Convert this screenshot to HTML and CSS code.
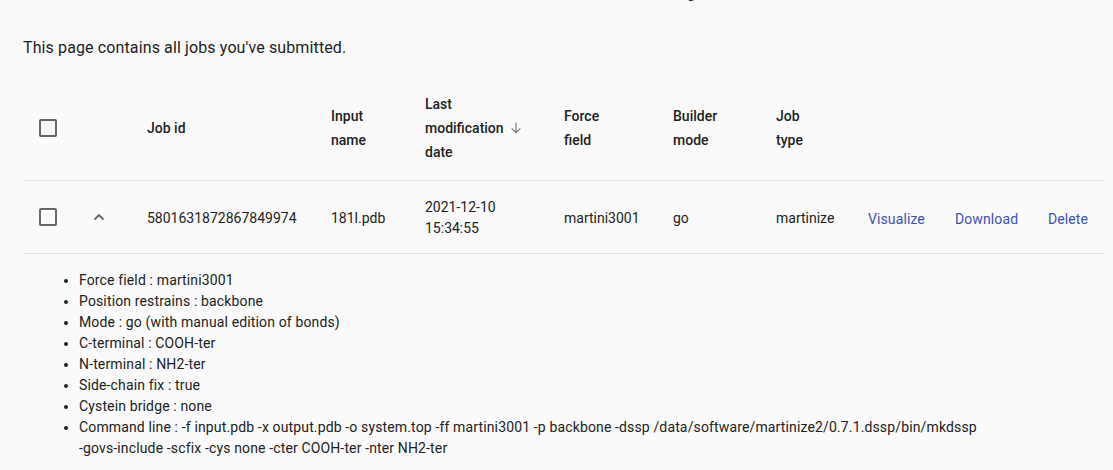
FILE: index.html
```html
<!DOCTYPE html>
<html>
<head>
<meta charset="utf-8">
<link rel="stylesheet" href="styles.css">
</head>
<body>
<div class="page">
  <h1 class="title">Job history</h1>
  <p class="intro">This page contains all jobs you've submitted.</p>
  <table class="jobs">
    <thead>
      <tr>
        <th class="c-check"><span class="box"></span></th>
        <th class="c-exp"></th>
        <th class="c-id">Job id</th>
        <th class="c-input">Input<br>name</th>
        <th class="c-date">Last<br>modification <svg class="sort" viewBox="0 0 24 24" width="16" height="16"><path d="M12 4v15M5.5 12.5L12 19l6.5-6.5" fill="none" stroke="#777" stroke-width="1.8"/></svg><br>date</th>
        <th class="c-ff">Force<br>field</th>
        <th class="c-mode">Builder<br>mode</th>
        <th class="c-type">Job<br>type</th>
        <th class="c-vis"></th>
        <th class="c-dl"></th>
        <th class="c-del"></th>
      </tr>
    </thead>
    <tbody>
      <tr class="row">
        <td class="c-check"><span class="box"></span></td>
        <td class="c-exp"><svg class="chev" viewBox="0 0 24 24" width="24" height="24"><path d="M7.5 14.5L12 10l4.5 4.5" fill="none" stroke="#666" stroke-width="1.8"/></svg></td>
        <td class="c-id">5801631872867849974</td>
        <td class="c-input">181l.pdb</td>
        <td class="c-date">2021-12-10<br>15:34:55</td>
        <td class="c-ff">martini3001</td>
        <td class="c-mode">go</td>
        <td class="c-type">martinize</td>
        <td class="c-vis"><a class="act">Visualize</a></td>
        <td class="c-dl"><a class="act">Download</a></td>
        <td class="c-del"><a class="act">Delete</a></td>
      </tr>
      <tr class="detail">
        <td colspan="11">
          <ul class="info">
            <li>Force field : martini3001</li>
            <li>Position restrains : backbone</li>
            <li>Mode : go (with manual edition of bonds)</li>
            <li>C-terminal : COOH-ter</li>
            <li>N-terminal : NH2-ter</li>
            <li>Side-chain fix : true</li>
            <li>Cystein bridge : none</li>
            <li>Command line : -f input.pdb -x output.pdb -o system.top -ff martini3001 -p backbone -dssp /data/software/martinize2/0.7.1.dssp/bin/mkdssp <span class="nw">-govs-include</span> -scfix -cys none -cter COOH-ter -nter NH2-ter</li>
          </ul>
        </td>
      </tr>
    </tbody>
  </table>
</div>
</body>
</html>
```

FILE: styles.css
```css
* { box-sizing: border-box; }
html, body {
  margin: 0;
  padding: 0;
  background: #fafafa;
  font-family: Roboto, "Liberation Sans", sans-serif;
  color: #222;
  overflow: hidden;
}
.page {
  padding: 0 9px 0 23px;
}
.title {
  margin: -38px 0 0 0;
  height: 40px;
  font-size: 34px;
  font-weight: 400;
  line-height: 40px;
  text-align: center;
  padding-left: 112px;
  color: #222;
}
.intro {
  margin: 36px 0 0 0;
  font-size: 16px;
  line-height: 20px;
  height: 38px;
  letter-spacing: 0.12px;
  color: #222;
}
.jobs {
  border-collapse: collapse;
  width: 1081px;
  table-layout: fixed;
  font-size: 14px;
}
.jobs th, .jobs td {
  padding: 0;
  text-align: left;
  vertical-align: middle;
}
.jobs thead th {
  font-weight: 500;
  line-height: 24px;
  height: 104px;
  color: #222;
  border-bottom: 1px solid #e0e0e0;
}
.jobs .row td {
  height: 73px;
  line-height: 21px;
  padding-top: 3px;
  color: #222;
  border-bottom: 1px solid #e0e0e0;
}
.jobs .row td.c-check,
.jobs .row td.c-exp {
  padding-top: 0;
}
.c-check { width: 64px; padding-left: 16px !important; }
.c-exp { width: 60px; }
.c-id { width: 184px; }
.c-input { width: 94px; }
.c-date { width: 139px; }
.c-ff { width: 109px; }
.c-mode { width: 103px; }
.c-type { width: 92px; }
.c-vis { width: 87px; }
.c-dl { width: 93px; }
.c-del { width: 56px; }
.box {
  display: block;
  width: 18px;
  height: 18px;
  border: 2px solid #666;
  border-radius: 2px;
}
.chev { display: block; }
.sort {
  vertical-align: -3px;
  margin-left: 1px;
}
.act {
  color: #3f51b5;
  font-size: 14px;
  letter-spacing: 0.1px;
  text-decoration: none;
  position: relative;
  top: 1px;
}
.detail td {
  padding: 12px 0 12px 0;
  box-shadow: 0 8px 8px -6px rgba(0,0,0,0.06);
}
.info {
  margin: 4px 0 0 0;
  padding-left: 56px;
  font-size: 14px;
  line-height: 21px;
  letter-spacing: 0.14px;
  color: #222;
  padding-right: 100px;
}
.nw { white-space: nowrap; }
```
